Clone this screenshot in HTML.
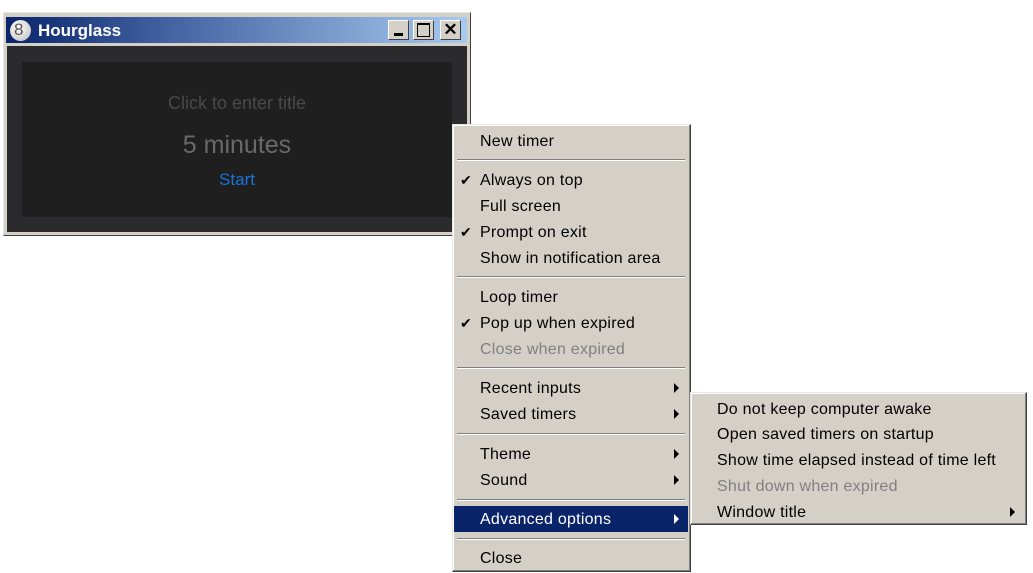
<!DOCTYPE html>
<html><head><style>
body{margin:0;width:1033px;height:573px;background:#fff;position:relative;overflow:hidden;font-family:"Liberation Sans",Tahoma,sans-serif;}
.a{position:absolute}
.win{left:3px;top:12px;width:466px;height:222px;background:#d4d0c8;border:1px solid;border-color:#e8e6e0 #404040 #404040 #e8e6e0}
.title{left:6px;top:17px;width:461px;height:26px;background:linear-gradient(to right,#0a246a 0%,#3a5a9a 30%,#a6caf0 100%)}
.btn{top:20px;width:21px;height:20px;background:#d4d0c8;border:1px solid;border-color:#fff #404040 #404040 #fff;box-sizing:border-box}
.menu{background:#d4d0c8;border:1px solid;border-color:#e8e6e0 #404040 #404040 #e8e6e0;box-shadow:inset -1px -1px 0 #808080,inset 1px 1px 0 #fff}
.it{position:absolute;font-size:16px;letter-spacing:0.25px;color:#000;line-height:26px;height:26px;margin-top:1px}
.sep{position:absolute;height:0;border-top:1px solid #808080;border-bottom:1px solid #fff}
.arr{position:absolute;width:0;height:0;border-left:5px solid #000;border-top:5px solid transparent;border-bottom:5px solid transparent}
.chk{position:absolute;font-size:14px}
</style></head><body>
<div class="a win"></div>
<div class="a title"></div>
<div class="a" style="left:10px;top:20px;width:21px;height:21px;border-radius:50%;background:radial-gradient(circle at 40% 35%,#fff,#bbb);"></div>
<div class="a" style="left:14px;top:20px;font-size:17px;color:#555;">8</div>
<div class="a" style="left:38px;top:21px;font-size:17px;font-weight:bold;color:#fff;">Hourglass</div>
<div class="a btn" style="left:388px"><div class="a" style="left:5px;top:12px;width:9px;height:3px;background:#000"></div></div>
<div class="a btn" style="left:413px"><div class="a" style="left:3px;top:2px;width:11px;height:11px;border:1px solid #000;border-top-width:2px"></div></div>
<div class="a btn" style="left:440px;font-weight:bold;font-size:17px;text-align:center;line-height:18px">✕</div>
<div class="a" style="left:7px;top:46px;width:460px;height:186px;background:#2b2b2d"></div>
<div class="a" style="left:22px;top:62px;width:430px;height:155px;background:#1f1f1f"></div>
<div class="a" style="left:22px;top:93px;width:430px;text-align:center;font-size:18px;color:#4a4a4a">Click to enter title</div>
<div class="a" style="left:22px;top:131px;width:430px;text-align:center;font-size:25px;color:#6a6a6a">5 minutes</div>
<div class="a" style="left:22px;top:170px;width:430px;text-align:center;font-size:17px;color:#1a73d8">Start</div>

<div class="a menu" style="left:452px;top:124px;width:237px;height:446px"></div>
<div class="it" style="left:480px;top:128px">New timer</div>
<div class="sep" style="left:457px;top:159px;width:228px"></div>
<div class="chk" style="left:460px;top:172px">✔</div>
<div class="it" style="left:480px;top:167px">Always on top</div>
<div class="it" style="left:480px;top:193px">Full screen</div>
<div class="chk" style="left:460px;top:224px">✔</div>
<div class="it" style="left:480px;top:219px">Prompt on exit</div>
<div class="it" style="left:480px;top:245px">Show in notification area</div>
<div class="sep" style="left:457px;top:276px;width:228px"></div>
<div class="it" style="left:480px;top:284px">Loop timer</div>
<div class="chk" style="left:460px;top:315px">✔</div>
<div class="it" style="left:480px;top:310px">Pop up when expired</div>
<div class="it" style="left:480px;top:336px;color:#808080">Close when expired</div>
<div class="sep" style="left:457px;top:367px;width:228px"></div>
<div class="it" style="left:480px;top:375px">Recent inputs</div><div class="arr" style="left:674px;top:383px"></div>
<div class="it" style="left:480px;top:401px">Saved timers</div><div class="arr" style="left:674px;top:409px"></div>
<div class="sep" style="left:457px;top:433px;width:228px"></div>
<div class="it" style="left:480px;top:441px">Theme</div><div class="arr" style="left:674px;top:449px"></div>
<div class="it" style="left:480px;top:467px">Sound</div><div class="arr" style="left:674px;top:475px"></div>
<div class="sep" style="left:457px;top:499px;width:228px"></div>
<div class="a" style="left:454px;top:506px;width:234px;height:26px;background:#0a246a"></div>
<div class="it" style="left:480px;top:506px;color:#fff">Advanced options</div><div class="arr" style="left:674px;top:514px;border-left-color:#fff"></div>
<div class="sep" style="left:457px;top:538px;width:228px"></div>
<div class="it" style="left:480px;top:545px">Close</div>

<div class="a menu" style="left:690px;top:392px;width:335px;height:131px"></div>
<div class="it" style="left:717px;top:396px">Do not keep computer awake</div>
<div class="it" style="left:717px;top:421px">Open saved timers on startup</div>
<div class="it" style="left:717px;top:447px">Show time elapsed instead of time left</div>
<div class="it" style="left:717px;top:473px;color:#808080">Shut down when expired</div>
<div class="it" style="left:717px;top:499px">Window title</div><div class="arr" style="left:1010px;top:507px"></div>
</body></html>
